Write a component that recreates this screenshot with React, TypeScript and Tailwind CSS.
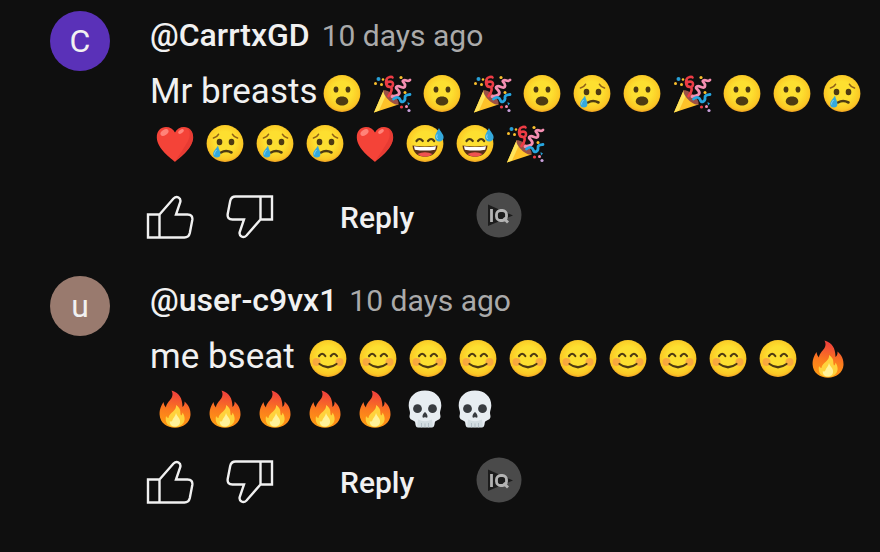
import { useId } from "react"
import type { ReactNode } from "react"
import { clsx } from "clsx"

type EmojiName = "wow" | "party" | "cry" | "heart" | "sweat" | "smile" | "fire" | "skull"

interface CommentData {
  author: string
  initial: string
  avatarClass: string
  age: string
  text: string
  emojis: EmojiName[]
}

const comments: CommentData[] = [
  {
    author: "@CarrtxGD",
    initial: "C",
    avatarClass: "bg-[#5a31b8]",
    age: "10 days ago",
    text: "Mr breasts",
    emojis: [
      "wow", "party", "wow", "party", "wow", "cry", "wow", "party", "wow", "wow", "cry",
      "heart", "cry", "cry", "cry", "heart", "sweat", "sweat", "party",
    ],
  },
  {
    author: "@user-c9vx1",
    initial: "u",
    avatarClass: "bg-[#997a6e]",
    age: "10 days ago",
    text: "me bseat ",
    emojis: [
      "smile", "smile", "smile", "smile", "smile", "smile", "smile", "smile", "smile", "smile", "fire",
      "fire", "fire", "fire", "fire", "fire", "skull", "skull",
    ],
  },
]

// Yellow disc shared by all the faces
function Face({ children }: { children: ReactNode }) {
  const id = useId()
  return (
    <>
      <radialGradient id={id} cx="0.5" cy="0.45" r="0.55">
        <stop offset="0.5" stopColor="#fddf30" />
        <stop offset="0.88" stopColor="#fbc724" />
        <stop offset="1" stopColor="#f0a324" />
      </radialGradient>
      <circle cx="19" cy="18.5" r="18.4" fill={`url(#${id})`} />
      {children}
    </>
  )
}

function Wow() {
  return (
    <Face>
      <g fill="#4d3a12">
        <ellipse cx="13" cy="14.5" rx="2.4" ry="3.1" />
        <ellipse cx="25" cy="14.5" rx="2.4" ry="3.1" />
        <path d="M19 21.5c4.2 0 6.2 2.3 6.2 4.8S22.5 30.500 19 30.500s-6.2-1.7-6.2-4.2S14.8 21.5 19 21.5z" />
      </g>
    </Face>
  )
}

function Cry() {
  return (
    <Face>
      <g fill="#4d3a12">
        <ellipse cx="13.5" cy="17" rx="2.8" ry="3.2" />
        <ellipse cx="25.5" cy="17" rx="2.8" ry="3.2" />
      </g>
      <g fill="none" strokeLinecap="round">
        <path d="M7.5 13Q11 12 12.5 9.3M31.5 13Q28 12 26.5 9.3" stroke="#8f6018" strokeWidth="1.6" />
        <path d="M15 27.5Q20 24.500 25.5 27.5" stroke="#4d3a12" strokeWidth="2.6" />
      </g>
      <path d="M12 20.5C10 24 7.2 26 7.2 29a3.6 3.6 0 0 0 7.2 0c0-3-1.8-5-2.4-8.5z" fill="#35a9dc" />
      <path d="M10.5 25c-1.5 2-2.2 3-1.8 4.5" fill="none" stroke="#8ed8f2" />
    </Face>
  )
}

function Sweat() {
  return (
    <Face>
      <path
        d="M10.5 16Q13.5 12 16.8 16M22 16Q25.2 12 28.2 16"
        fill="none"
        stroke="#4d3a12"
        strokeWidth="2.2"
        strokeLinecap="round"
      />
      <path d="M6.5 20.5Q19 22.5 31.5 20.5C31 28 26 31.8 19 31.8S7 28 6.5 20.5z" fill="#5a2f18" />
      <path d="M8 21.2Q19 23 30 21.2l-.8 3.5Q19 26.5 8.8 24.7z" fill="#fff" />
      <path d="M11.5 29Q19 25.7 26.5 29Q23.5 31.8 19 31.8T11.5 29z" fill="#ef5350" />
      <path d="M33 3C31 7 29 9 29 12.2a4.3 4.3 0 0 0 8.6 0C37.6 9 34.5 7 33 3z" fill="#35a9dc" />
      <path d="M31.2 9.5q-1.4 3 .3 4.5" fill="none" stroke="#9bdcf5" />
    </Face>
  )
}

function Smile() {
  return (
    <Face>
      <circle cx="7.5" cy="22" r="4" fill="#f78c4b" opacity="0.6" />
      <circle cx="30.5" cy="22" r="4" fill="#f78c4b" opacity="0.6" />
      <g fill="none" stroke="#4d3a12" strokeWidth="2.2" strokeLinecap="round">
        <path d="M10 16Q13.200 11.5 16.3 16M21.8 16Q25 11.5 28 16" />
        <path d="M10.5 24Q19 30.5 27.5 24" />
      </g>
    </Face>
  )
}

function Heart() {
  return (
    <>
      <path
        d="M19 37C16 34 1 24 0.8 12.5C0.6 6 5 2 10 2c4 0 7.4 2 9 5.5C20.6 4 24 2 28 2c5 0 9.4 4 9.2 10.5C37 24 22 34 19 37z"
        fill="#f44338"
      />
      <path d="M31 3c3 2 4 8 .5 14S24 29 20 35C26 30 37 22 37 12.5C37 7 34 3.5 31 3z" fill="#d9332e" opacity="0.5" />
      <ellipse cx="8.5" cy="7.5" rx="4.5" ry="2.7" transform="rotate(-35 8.5 7.5)" fill="#ff8379" />
      <ellipse cx="25" cy="6.5" rx="3.2" ry="1.7" transform="rotate(-35 25 6.5)" fill="#ff8379" />
    </>
  )
}

function Party() {
  return (
    <>
      <path d="M1 37.5L10.5 15.5Q20 19.5 25.5 29.5z" fill="#ffc229" />
      <path d="M1 37.5L10.5 15.5L14 18L6 35.5z" fill="#ffe45a" />
      <path d="M10.5 15.5C15 14 27 24 25.5 29.5C20 31 9.5 20.5 10.5 15.5z" fill="#9a5145" />
      <g fill="none" strokeLinecap="round" strokeLinejoin="round">
        <path d="M15.5 21C19 17 20 12 16.5 12S12.5 7.5 13.5 4.5S19 1.5 19.5 2.5M13.5 9C14 6 20.5 5.5 20 9.5S14 12 13.5 9" stroke="#ed3c45" strokeWidth="2.6" />
        <path d="M19 21.5C24 21 27.5 19.5 26 16.5S21.5 13 24 11.5S31.5 15 32 11S28 7 30.5 5.5S34 7.5 37 5" stroke="#f58fb2" strokeWidth="2.8" />
        <path d="M20.5 24C24 21 26.5 22.5 27.5 25.5S32.5 26 32 23S34 20 37 19.5" stroke="#27a6df" strokeWidth="2.8" />
      </g>
      <g fill="#fbc02d">
        <circle cx="2.5" cy="8.5" r="1.5" />
        <circle cx="8.5" cy="9.5" r="1.5" />
        <circle cx="10" cy="4.5" r="1.3" />
        <circle cx="28" cy="2.5" r="1.6" />
        <circle cx="32" cy="17.5" r="1.5" />
      </g>
      <circle cx="5.5" cy="4" r="2" fill="#289fd5" />
      <path d="M34.5 27l2.5 1.5l-2 2z" fill="#289fd5" />
      <circle cx="28.5" cy="32" r="1.6" fill="#ed3c45" />
      <circle cx="33.5" cy="31.5" r="1.5" fill="#f58fb2" />
      <circle cx="36" cy="35.5" r="1.6" fill="#c9a0dc" />
    </>
  )
}

function Fire() {
  const id = useId()
  return (
    <>
      <linearGradient id={id} x1="0.6" y1="0" x2="0.45" y2="1">
        <stop offset="0.1" stopColor="#f0443a" />
        <stop offset="0.55" stopColor="#fb7a1e" />
        <stop offset="1" stopColor="#ff9c12" />
      </linearGradient>
      <path
        d="M15.5 0.5C23 2.5 26.5 8 26.5 17C28 16 28.8 14 28.5 11.5C33 15 34.8 20 34.5 25C34 33 27 37.7 19 37.7S4 33 3.6 24.5C3.3 19.5 5.5 15 7.5 12C8 14.5 8.5 16 10 17.5C10.5 11 19.5 8.5 15.5 0.5z"
        fill={`url(#${id})`}
      />
      <path
        d="M20 15C26 19 23.5 22.5 25 25.5C26 25 26.5 23.5 26.5 22.5C32 31 26 37 19 37C12.5 37 8.5 33 10 26C10.7 27 11.5 28 12.5 28C13 22.5 21 21 20 15z"
        fill="#ffd23c"
      />
      <path d="M20 23C20.5 26 23.5 27.5 24 30.5C24.5 34 22.5 36.5 19 36.5S13.5 34.5 13.8 31C15 32 16 31.5 16.5 30C17 28 19.5 26.5 20 23z" fill="#fff29a" />
    </>
  )
}

function Skull() {
  return (
    <>
      <path
        d="M19 0.5C28.5 0.5 35.3 6.5 35.3 15.5C35.3 18.5 34 20.5 34 23C34 25 35 26 34.2 28C33.2 30.5 29.5 30 28.8 32.5C28.5 34 28.5 37.5 26 37.5H12C9.5 37.5 9.5 34 9.2 32.5C8.5 30 4.8 30.5 3.8 28C3 26 4 25 4 23C4 20.5 2.7 18.5 2.7 15.5C2.7 6.5 9.5 0.5 19 0.5z"
        fill="#e7edf2"
      />
      <path d="M12 29.5Q19 33 26 29.5l1 7.5H11z" fill="#d3dde2" />
      <path d="M15.5 33v4.5M19 33.5v4M22.5 33v4.5" stroke="#a9b8c0" strokeWidth="0.8" />
      <g fill="#373b40">
        <circle cx="11.5" cy="18.7" r="4.4" />
        <circle cx="26.5" cy="18.7" r="4.4" />
        <path d="M19 22C20.5 23 21.8 25.5 21.5 27.3Q20 28.5 19 26.8Q18 28.5 16.5 27.3C16.2 25.5 17.5 23 19 22z" />
      </g>
    </>
  )
}

const emojiMap: Record<EmojiName, { label: string; Art: () => ReactNode }> = {
  wow: { label: "face with open mouth", Art: Wow },
  party: { label: "party popper", Art: Party },
  cry: { label: "crying face", Art: Cry },
  heart: { label: "red heart", Art: Heart },
  sweat: { label: "grinning face with sweat", Art: Sweat },
  smile: { label: "smiling face", Art: Smile },
  fire: { label: "fire", Art: Fire },
  skull: { label: "skull", Art: Skull },
}

function Emoji({ name }: { name: EmojiName }) {
  const { label, Art } = emojiMap[name]
  return (
    <svg role="img" aria-label={label} viewBox="0 0 38 38" className="inline-block h-[38px] w-[50px] align-middle">
      <Art />
    </svg>
  )
}

function ThumbIcon({ down = false }: { down?: boolean }) {
  return (
    <svg
      viewBox="0 0 48 44"
      className={clsx("h-11 w-12", down && "rotate-180")}
      fill="none"
      stroke="#f1f1f1"
      strokeWidth="2.4"
      aria-hidden="true"
    >
      <path d="M2 19.5H13.5V42.5H2zM13.5 19.5L27.5 3.5Q30 1 32.5 2.5Q35 4 34.3 7L30 19.5H41.5Q47 19.5 46.3 25L43.8 38Q42.8 42.5 38.5 42.5H13.5" />
    </svg>
  )
}

// Round grey badge with a dark play triangle behind the letters
function IqBadge() {
  return (
    <svg viewBox="0 0 46 46" className="size-[46px]" aria-hidden="true">
      <circle cx="23" cy="23" r="22.5" fill="#4a4a4a" />
      <path d="M12 12.5L37 23.5L12 34z" fill="#1c1c1c" />
      <g fill="none" stroke="#b4b4b4" strokeWidth="2.8">
        <path d="M15.5 17V30" />
        <rect x="20.5" y="18.5" width="10" height="10" rx="4" />
        <path d="M27.5 26L32 30.5" />
      </g>
    </svg>
  )
}

function Comment({ author, initial, avatarClass, age, text, emojis }: CommentData) {
  return (
    <article className="flex gap-10">
      <div
        className={clsx(
          "flex size-[60px] shrink-0 items-center justify-center rounded-full text-[32px]",
          avatarClass
        )}
      >
        {initial}
      </div>
      <div className="min-w-0 flex-1">
        <header className="flex h-12 items-baseline gap-3 leading-[48px]">
          <h3 className="text-[32px] font-medium">{author}</h3>
          <span className="text-[30px] text-[#aaa]">{age}</span>
        </header>
        <p className="mt-2 text-[35px] leading-[50px]">
          {text}
          {emojis.map((name, i) => (
            <Emoji key={i} name={name} />
          ))}
        </p>
        <div className="mt-[26px] flex h-12 items-center">
          <button type="button" aria-label="Like" className="-ml-1">
            <ThumbIcon />
          </button>
          <button type="button" aria-label="Dislike" className="ml-8">
            <ThumbIcon down />
          </button>
          <button type="button" className="ml-[66px] text-[30px] font-medium">
            Reply
          </button>
          <button type="button" aria-label="IQ" className="mb-1 ml-[62px]">
            <IqBadge />
          </button>
        </div>
      </div>
    </article>
  )
}

export default function App() {
  return (
    <main className="flex min-h-screen flex-col gap-[35px] bg-[#0f0f0f] pt-[11px] pr-2 pb-9 pl-[50px] font-['Roboto','Liberation_Sans',sans-serif] text-[#f1f1f1]">
      {comments.map((comment) => (
        <Comment key={comment.author} {...comment} />
      ))}
    </main>
  )
}
